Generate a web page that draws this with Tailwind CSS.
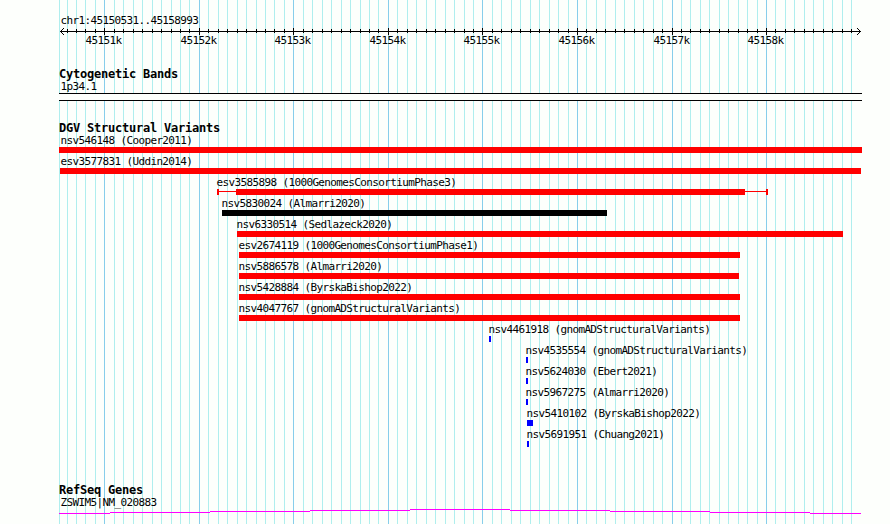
<!DOCTYPE html>
<html lang="en">
<head>
  <meta charset="UTF-8">
  <meta name="viewport" content="width=device-width, initial-scale=1.0">
  <title>chr1:45150531..45158993</title>
  <script src="https://cdn.jsdelivr.net/npm/@tailwindcss/browser@4"></script>
</head>
<body class="bg-[#fdfffc]">
  <main class="relative w-[890px] h-[524px] overflow-hidden flex flex-col text-black text-[11px] font-['DejaVu_Sans_Mono',monospace] tracking-[-0.63px] whitespace-nowrap">
    <svg id="grid" class="absolute inset-0" width="890" height="524" shape-rendering="crispEdges"></svg>

    <header class="relative h-[67px] shrink-0 pt-[14px]">
      <div class="h-[13px] leading-[13px] pl-[60.5px]">chr1:45150531..45158993</div>
      <svg id="ruler" class="block" width="890" height="26" viewBox="0 27 890 26"></svg>
    </header>

    <section class="relative h-[54px] shrink-0">
      <h2 class="h-[13px] leading-[15px] pl-[59px] text-[12px] font-bold tracking-[-0.22px]">Cytogenetic Bands</h2>
      <div class="h-[13px] leading-[13px] pl-[60.5px]">1p34.1</div>
      <div class="ml-[59px] w-[803px] h-2 border-y border-black bg-[#fdfffc]"></div>
    </section>

    <section class="relative h-[362px] shrink-0">
      <h2 class="h-[13px] leading-[15px] pl-[59px] text-[12px] font-bold tracking-[-0.22px]">DGV Structural Variants</h2>
      <div id="variants"></div>
    </section>

    <section class="relative shrink-0">
      <h2 class="h-[13px] leading-[15px] pl-[59px] text-[12px] font-bold tracking-[-0.22px]">RefSeq Genes</h2>
      <div class="h-[13px] leading-[13px] pl-[60.5px]">ZSWIM5|NM_020883</div>
      <svg class="block" width="890" height="15" viewBox="0 509 890 15" shape-rendering="crispEdges">
        <path fill="#f0f" d="M59 513h51v1h-51zM110 512h100v1h-100zM210 511h100v1h-100zM310 510h100v1h-100zM410 509h100v1h-100zM510 510h100v1h-100zM610 511h100v1h-100zM710 512h100v1h-100zM810 513h51v1h-51z"/>
      </svg>
    </section>
  </main>

  <script>
    const start = 45150531, end = 45158993
    const toX = (pos) => Math.round(60 + (pos - start) * 800 / (end - start + 1))

    // grid lines and ruler ticks, one per 100 bp
    let grid = '<rect x="59" y="0" width="1" height="524" fill="#afeeee"/>'
    let ruler = '<g shape-rendering="crispEdges"><rect x="60" y="31" width="801" height="1"/>'
    let labels = ''
    for (let pos = 45150600; pos < end; pos += 100) {
      const x = toX(pos)
      const major = pos % 1000 === 0
      grid += `<rect x="${x}" y="0" width="1" height="524" fill="${major ? '#87ceeb' : '#afeeee'}"/>`
      ruler += `<rect x="${x}" y="${major ? 28 : 29}" width="1" height="${major ? 7 : 4}"/>`
      if (major) labels += `<text x="${x - 18.5}" y="44">${pos / 1000}k</text>`
    }
    for (let i = 1; i <= 3; i++) {
      for (const y of [31 - i, 31 + i]) {
        ruler += `<rect x="${60 + i}" y="${y}" width="1" height="1"/><rect x="${860 - i}" y="${y}" width="1" height="1"/>`
      }
    }
    document.querySelector("#grid").innerHTML = grid
    document.querySelector("#ruler").innerHTML = ruler + '</g>' + labels

    // label, label x, bar start, bar end, colour
    const variants = [
      ["nsv546148 (Cooper2011)", 60.5, 59, 862, "#f00"],
      ["esv3577831 (Uddin2014)", 60.5, 60, 861, "#f00"],
      ["esv3585898 (1000GenomesConsortiumPhase3)", 216.5, 236, 745, "#f00", [217, 768]],
      ["nsv5830024 (Almarri2020)", 221.5, 222, 607, "#000"],
      ["nsv6330514 (Sedlazeck2020)", 236.5, 237, 843, "#f00"],
      ["esv2674119 (1000GenomesConsortiumPhase1)", 238.5, 239, 740, "#f00"],
      ["nsv5886578 (Almarri2020)", 238.5, 239, 739, "#f00"],
      ["nsv5428884 (ByrskaBishop2022)", 238.5, 239, 740, "#f00"],
      ["nsv4047767 (gnomADStructuralVariants)", 238.5, 239, 740, "#f00"],
      ["nsv4461918 (gnomADStructuralVariants)", 488.5, 489, 491, "#00f"],
      ["nsv4535554 (gnomADStructuralVariants)", 525.5, 526, 528, "#00f"],
      ["nsv5624030 (Ebert2021)", 525.5, 526, 528, "#00f"],
      ["nsv5967275 (Almarri2020)", 525.5, 526, 528, "#00f"],
      ["nsv5410102 (ByrskaBishop2022)", 526.5, 527, 533, "#00f"],
      ["nsv5691951 (Chuang2021)", 526.5, 527, 529, "#00f"],
    ]
    document.querySelector("#variants").innerHTML = variants.map(([name, labelX, x1, x2, color, range]) => {
      let bar = `<rect x="${x1}" width="${x2 - x1}" height="6"/>`
      if (range) {
        const [a, b] = range
        bar += `<rect x="${a}" y="2" width="${b - a}" height="1"/><rect x="${a}" width="2" height="6"/><rect x="${b - 2}" width="2" height="6"/>`
      }
      return `<div class="h-[21px]">
        <div class="h-[13px] leading-[13px]" style="padding-left:${labelX}px">${name}</div>
        <svg class="block" width="890" height="6" fill="${color}" shape-rendering="crispEdges">${bar}</svg>
      </div>`
    }).join("")
  </script>
</body>
</html>
